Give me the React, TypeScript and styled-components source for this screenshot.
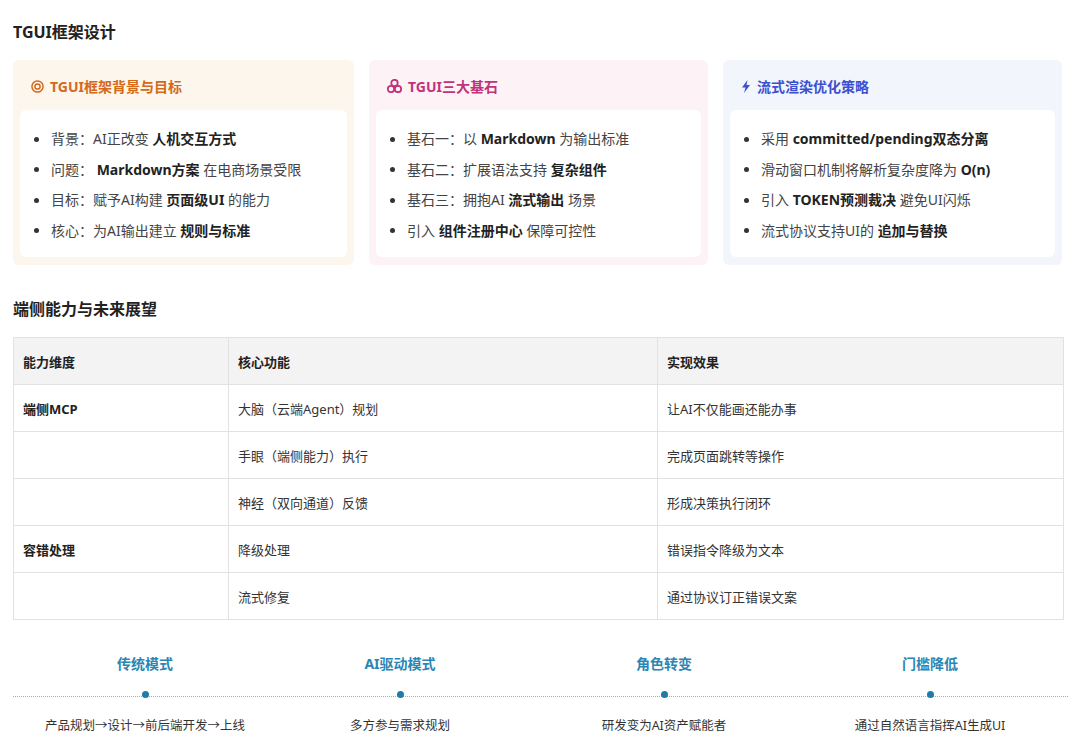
import React from 'react';
import styled, { createGlobalStyle } from 'styled-components';

const Global = createGlobalStyle`
  body {
    margin: 0;
    background: #fff;
    font-family: "Noto Sans", "Noto Sans CJK SC", sans-serif;
    color: #222;
  }
`;

const Page = styled.div`
  width: 1080px;
  padding: 18px 18px 0 13px;
  box-sizing: border-box;
`;

const Heading = styled.h2`
  margin: 0 0 14px;
  font-size: 16px;
  font-weight: 700;
  color: #222;
  line-height: 28px;
`;

const Cards = styled.div`
  display: grid;
  grid-template-columns: 341px 339px 339px;
  gap: 15px;
`;

const Card = styled.div<{ $bg: string }>`
  background: ${p => p.$bg};
  border-radius: 6px;
  padding: 12px 7px 8px;
  height: 205px;
  box-sizing: border-box;
  display: flex;
  flex-direction: column;
`;

const CardTitle = styled.div<{ $color: string }>`
  display: flex;
  align-items: center;
  gap: 6px;
  color: ${p => p.$color};
  font-size: 14px;
  font-weight: 700;
  height: 28px;
  padding-left: 11px;
  margin-bottom: 10px;
`;

const CardBody = styled.ul`
  flex: 1;
  margin: 0;
  background: #fff;
  border-radius: 6px;
  list-style: none;
  padding: 14px 0 0 14px;
`;

const Item = styled.li`
  font-size: 14px;
  color: #444;
  line-height: 30.5px;
  display: flex;
  align-items: center;
  white-space: pre;
  b { color: #222; font-weight: 700; }
  &::before {
    content: '';
    width: 5px;
    height: 5px;
    border-radius: 50%;
    background: #333;
    margin-right: 12px;
  }
`;

const Table = styled.div`
  display: grid;
  grid-template-columns: 215px 429px 405px;
  border: 1px solid #e2e2e2;
  width: 1049px;
`;

const Cell = styled.div<{ $head?: boolean; $bold?: boolean }>`
  height: 46px;
  display: flex;
  align-items: center;
  padding-left: 9px;
  font-size: 13px;
  border-right: 1px solid #e2e2e2;
  border-bottom: 1px solid #e2e2e2;
  background: ${p => (p.$head ? '#f3f3f3' : '#fff')};
  font-weight: ${p => (p.$head || p.$bold ? 700 : 400)};
  color: ${p => (p.$head || p.$bold ? '#222' : '#333')};
  &:nth-child(3n) { border-right: none; }
  &:nth-last-child(-n + 3) { border-bottom: none; }
`;

const Timeline = styled.div`
  display: grid;
  grid-template-columns: 264px 246px 282px 250px;
  margin-top: 30px;
  position: relative;
  &::before {
    content: '';
    position: absolute;
    left: 0;
    right: -6px;
    top: 46px;
    border-top: 1.5px dotted #7fb7cf;
  }
`;

const Step = styled.div`
  display: flex;
  flex-direction: column;
  align-items: center;
`;

const StepTitle = styled.div`
  color: #2a86b3;
  font-size: 14px;
  font-weight: 700;
  height: 28px;
  line-height: 28px;
`;

const Dot = styled.div`
  width: 7px;
  height: 7px;
  border-radius: 50%;
  background: #1f7ca8;
  margin: 13px 0 17px;
  position: relative;
`;

const StepText = styled.div`
  font-size: 12.5px;
  color: #333;
`;

const Target = () => (
  <svg width="13" height="13" viewBox="0 0 14 14">
    <circle cx="7" cy="7" r="6" fill="none" stroke="#d4691c" strokeWidth="1.6" />
    <circle cx="7" cy="7" r="2.8" fill="none" stroke="#d4691c" strokeWidth="1.6" />
  </svg>
);
const Cubes = () => (
  <svg width="15" height="14" viewBox="0 0 15 14">
    <circle cx="7.5" cy="4" r="3.2" fill="none" stroke="#c0337a" strokeWidth="1.8" />
    <circle cx="4" cy="10" r="3.2" fill="none" stroke="#c0337a" strokeWidth="1.8" />
    <circle cx="11" cy="10" r="3.2" fill="none" stroke="#c0337a" strokeWidth="1.8" />
  </svg>
);
const Bolt = () => (
  <svg width="10" height="13" viewBox="0 0 10 13">
    <path d="M6.5 0 L1 7.5 H4.5 L3 13 L9 5 H5.5 Z" fill="#3b4fd1" />
  </svg>
);

const rows: [string, string, string][] = [
  ['端侧MCP', '大脑（云端Agent）规划', '让AI不仅能画还能办事'],
  ['', '手眼（端侧能力）执行', '完成页面跳转等操作'],
  ['', '神经（双向通道）反馈', '形成决策执行闭环'],
  ['容错处理', '降级处理', '错误指令降级为文本'],
  ['', '流式修复', '通过协议订正错误文案'],
];

const steps = [
  ['传统模式', '产品规划→设计→前后端开发→上线'],
  ['AI驱动模式', '多方参与需求规划'],
  ['角色转变', '研发变为AI资产赋能者'],
  ['门槛降低', '通过自然语言指挥AI生成UI'],
];

export default function App() {
  return (
    <Page>
      <Global />
      <Heading>TGUI框架设计</Heading>
      <Cards>
        <Card $bg="#fdf6ec">
          <CardTitle $color="#d4691c"><Target />TGUI框架背景与目标</CardTitle>
          <CardBody>
            <Item>背景：AI正改变 <b>人机交互方式</b></Item>
            <Item>问题： <b>Markdown方案</b> 在电商场景受限</Item>
            <Item>目标：赋予AI构建 <b>页面级UI</b> 的能力</Item>
            <Item>核心：为AI输出建立 <b>规则与标准</b></Item>
          </CardBody>
        </Card>
        <Card $bg="#fdf2f6">
          <CardTitle $color="#c0337a"><Cubes />TGUI三大基石</CardTitle>
          <CardBody>
            <Item>基石一：以 <b>Markdown</b> 为输出标准</Item>
            <Item>基石二：扩展语法支持 <b>复杂组件</b></Item>
            <Item>基石三：拥抱AI <b>流式输出</b> 场景</Item>
            <Item>引入 <b>组件注册中心</b> 保障可控性</Item>
          </CardBody>
        </Card>
        <Card $bg="#f3f5fd">
          <CardTitle $color="#3b4fd1"><Bolt />流式渲染优化策略</CardTitle>
          <CardBody>
            <Item>采用 <b>committed/pending双态分离</b></Item>
            <Item>滑动窗口机制将解析复杂度降为 <b>O(n)</b></Item>
            <Item>引入 <b>TOKEN预测裁决</b> 避免UI闪烁</Item>
            <Item>流式协议支持UI的 <b>追加与替换</b></Item>
          </CardBody>
        </Card>
      </Cards>
      <Heading style={{ marginTop: 30 }}>端侧能力与未来展望</Heading>
      <Table>
        <Cell $head>能力维度</Cell>
        <Cell $head>核心功能</Cell>
        <Cell $head>实现效果</Cell>
        {rows.map((r, i) => (
          <React.Fragment key={i}>
            <Cell $bold>{r[0]}</Cell>
            <Cell>{r[1]}</Cell>
            <Cell>{r[2]}</Cell>
          </React.Fragment>
        ))}
      </Table>
      <Timeline>
        {steps.map(s => (
          <Step key={s[0]}>
            <StepTitle>{s[0]}</StepTitle>
            <Dot />
            <StepText>{s[1]}</StepText>
          </Step>
        ))}
      </Timeline>
    </Page>
  );
}
